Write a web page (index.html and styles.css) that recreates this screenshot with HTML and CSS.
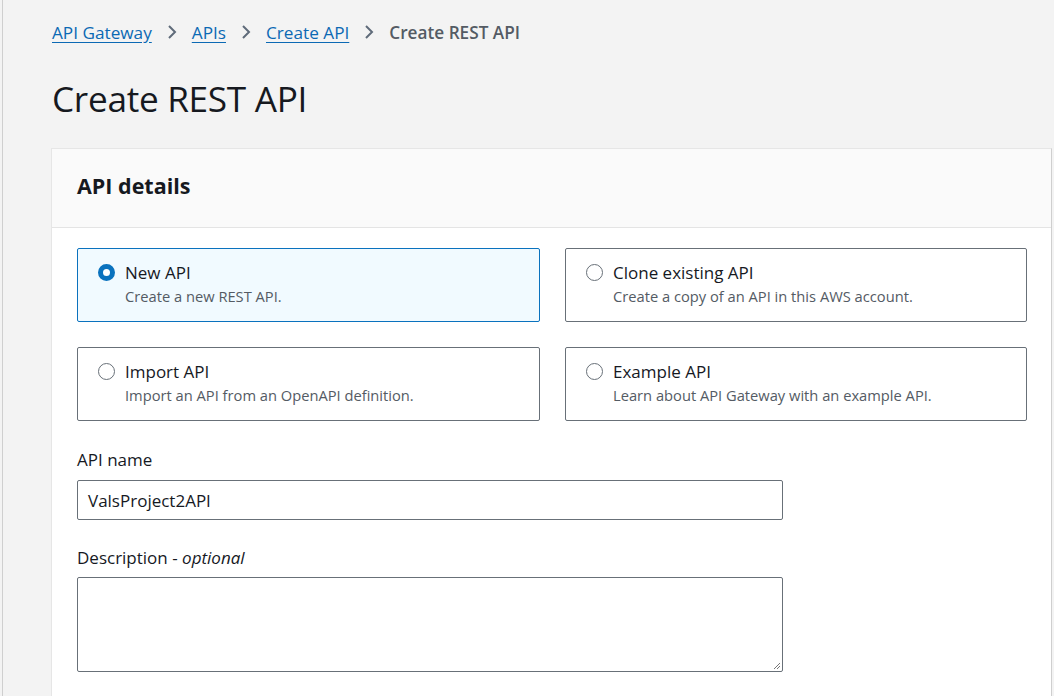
FILE: index.html
```html
<!DOCTYPE html>
<html lang="en">
<head>
<meta charset="utf-8">
<title>Create REST API</title>
<link rel="stylesheet" href="styles.css">
</head>
<body>
<div class="page">
  <nav class="crumbs">
    <a href="#">API Gateway</a>
    <svg class="chev" viewBox="0 0 16 16" width="16" height="16"><path d="M5 2l6 6-6 6" fill="none" stroke="#5f6b7a" stroke-width="2"/></svg>
    <a href="#">APIs</a>
    <svg class="chev" viewBox="0 0 16 16" width="16" height="16"><path d="M5 2l6 6-6 6" fill="none" stroke="#5f6b7a" stroke-width="2"/></svg>
    <a href="#">Create API</a>
    <svg class="chev" viewBox="0 0 16 16" width="16" height="16"><path d="M5 2l6 6-6 6" fill="none" stroke="#5f6b7a" stroke-width="2"/></svg>
    <span class="current">Create REST API</span>
  </nav>
  <h1 class="title">Create REST API</h1>
  <section class="card">
    <header class="card-head"><h2>API details</h2></header>
    <div class="card-body">
      <div class="tiles">
        <label class="tile selected">
          <span class="radio on"></span>
          <span class="tile-text"><span class="tile-title">New API</span><span class="tile-desc">Create a new REST API.</span></span>
        </label>
        <label class="tile">
          <span class="radio"></span>
          <span class="tile-text"><span class="tile-title">Clone existing API</span><span class="tile-desc">Create a copy of an API in this AWS account.</span></span>
        </label>
        <label class="tile">
          <span class="radio"></span>
          <span class="tile-text"><span class="tile-title">Import API</span><span class="tile-desc">Import an API from an OpenAPI definition.</span></span>
        </label>
        <label class="tile">
          <span class="radio"></span>
          <span class="tile-text"><span class="tile-title">Example API</span><span class="tile-desc">Learn about API Gateway with an example API.</span></span>
        </label>
      </div>
      <div class="field">
        <div class="flabel">API name</div>
        <div class="input">ValsProject2API</div>
      </div>
      <div class="field">
        <div class="flabel">Description - <i>optional</i></div>
        <div class="textarea">
          <svg class="grip" viewBox="0 0 10 10" width="10" height="10"><path d="M9 3L3 9M9 6L6 9" stroke="#777" stroke-width="1"/></svg>
        </div>
      </div>
    </div>
  </section>
</div>
</body>
</html>
```
FILE: styles.css
```css
* { box-sizing: border-box; }
html, body { margin: 0; height: 100%; }
body {
  background: #f3f3f3;
  font-family: "Open Sans", "Noto Sans", sans-serif;
  color: #16191f;
  overflow: hidden;
}
.page {
  margin-left: 2px;
  border-left: 1px solid #cfcfcf;
  min-height: 100%;
  padding: 19px 0 0 49px;
}
.crumbs {
  display: flex;
  align-items: center;
  gap: 12px;
  font-size: 17.2px;
  height: 26px;
}
.crumbs a {
  color: #0b69b4;
  text-decoration: underline;
  text-underline-offset: 3px;
}
.chev { display: block; }
.current { color: #545b64; font-weight: 600; }
.title {
  margin: 29px 0 0;
  font-size: 35.2px;
  font-weight: 400;
  line-height: 48px;
  letter-spacing: -0.3px;
}
.card {
  margin-top: 26px;
  margin-left: -1px;
  margin-right: 2px;
  background: #fff;
  border: 1px solid #e6e6e6;
  border-right-color: #cfcfcf;
  border-bottom: 0;
}
.card-head {
  height: 79px;
  background: #fafafa;
  border-bottom: 1px solid #e4e4e4;
  display: flex;
  align-items: center;
  padding: 0 0 5px 25px;
}
.card-head h2 {
  margin: 0;
  font-size: 21.5px;
  font-weight: 700;
}
.card-body {
  padding: 20px 24px 30px 25px;
}
.tiles {
  display: grid;
  grid-template-columns: 463px 462px;
  column-gap: 25px;
  row-gap: 25px;
}
.tile {
  display: flex;
  align-items: flex-start;
  gap: 10px;
  height: 74px;
  padding: 12px 20px 0 20px;
  border: 1px solid #687078;
  border-radius: 2px;
  background: #fff;
}
.tile.selected {
  background: #f1faff;
  border-color: #0a72be;
}
.radio {
  flex: none;
  width: 17px;
  height: 17px;
  margin-top: 3px;
  border: 1.5px solid #687078;
  border-radius: 50%;
  background: #fff;
}
.radio.on {
  border: 5px solid #0a72be;
}
.tile-text { display: flex; flex-direction: column; }
.tile-title { font-size: 17px; line-height: 23px; }
.tile-desc { font-size: 14.7px; line-height: 25px; color: #545b64; }
.field { margin-top: 28px; }
.field + .field { margin-top: 27px; }
.flabel {
  font-size: 17px;
  line-height: 22px;
}
.flabel i { color: #16191f; }
.input {
  margin-top: 9px;
  width: 706px;
  height: 40px;
  border: 1px solid #687078;
  border-radius: 2px;
  padding: 0 10px;
  display: flex;
  align-items: center;
  font-size: 17px;
}
.textarea {
  margin-top: 8px;
  width: 706px;
  height: 95px;
  border: 1px solid #687078;
  border-radius: 2px;
  position: relative;
}
.grip { position: absolute; right: 1px; bottom: 1px; }
```
